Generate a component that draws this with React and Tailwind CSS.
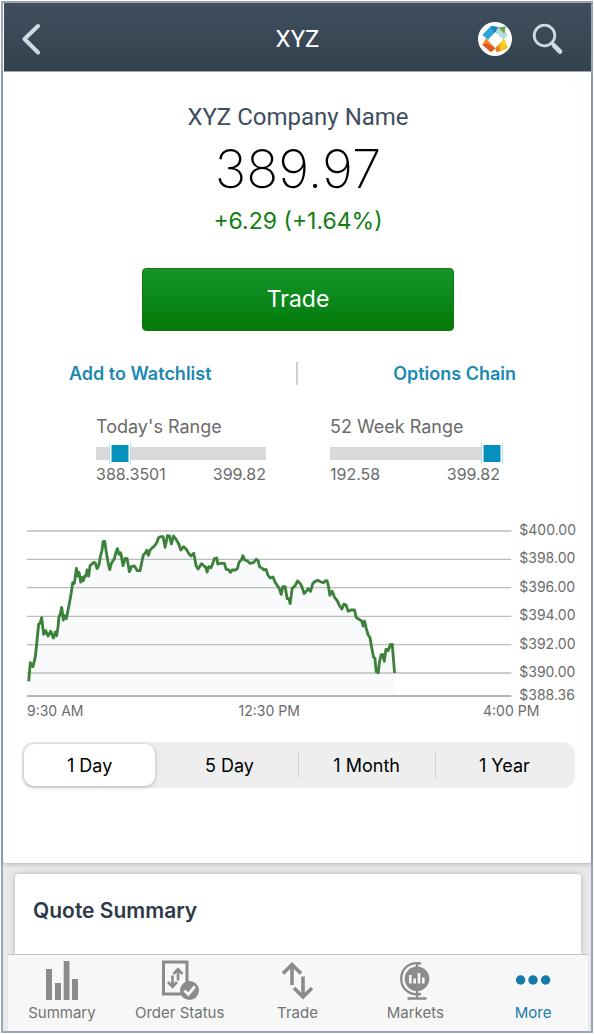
import { useState } from 'react';

const quote = {
  symbol: 'XYZ',
  name: 'XYZ Company Name',
  price: 389.97,
  change: '+6.29 (+1.64%)',
};

const ranges = [
  { label: "Today's Range", low: '388.3501', high: '399.82' },
  { label: '52 Week Range', low: '192.58', high: '399.82' },
];

const periods = ['1 Day', '5 Day', '1 Month', '1 Year'];

const priceTicks = ['$400.00', '$398.00', '$396.00', '$394.00', '$392.00', '$390.00'];
const gridLines = [33, 118, 203, 289, 374, 459, 528];

const intraday =
  '26,484 31,428 39,440 46,410 50,372 56,312 60,310 65,293 71,343 77,332 84,348 92,334 100,354 106,336 110,347 114,320 117,290 121,282 125,262 130,300 134,287 139,296 148,250 153,222 158,188 163,190 169,145 173,168 177,157 182,186 186,172 190,182 194,168 198,168 201,150 206,168 210,136 216,132 221,127 226,130 231,146 236,137 241,110 246,90 249,65 254,64 258,92 264,127 269,149 274,130 282,118 288,97 292,86 297,103 302,98 309,137 315,115 321,116 328,155 334,140 343,138 352,152 360,152 366,122 370,105 375,100 380,91 385,106 390,90 397,83 403,78 410,68 415,54 421,50 429,50 435,82 442,47 448,48 454,72 460,48 468,58 476,72 482,90 490,80 499,88 507,102 513,108 521,100 528,137 534,147 544,131 552,138 557,142 561,156 566,140 573,143 578,130 583,116 590,114 593,132 600,130 613,130 618,148 625,149 631,157 636,150 646,150 652,145 657,126 664,120 668,107 674,120 682,123 690,130 700,128 708,118 714,122 718,140 726,145 732,150 738,148 743,165 750,174 759,171 764,185 772,197 778,207 783,223 788,200 795,200 801,236 806,236 810,251 816,205 825,197 832,183 840,190 845,200 852,221 858,214 864,206 871,214 878,190 885,184 893,181 902,186 910,188 916,182 921,183 925,200 929,226 936,214 943,232 951,242 958,257 965,267 971,252 978,256 984,274 992,270 1003,270 1008,292 1016,298 1024,302 1029,318 1033,303 1038,325 1044,345 1049,352 1054,380 1060,412 1064,414 1068,455 1074,458 1078,425 1083,404 1088,404 1092,424 1097,388 1104,392 1110,374 1116,373 1123,459';

function ChevronIcon() {
  return (
    <svg className="w-5 h-8" viewBox="0 0 20 32" fill="none" stroke="#cddae4" strokeWidth="4" strokeLinecap="round" strokeLinejoin="round">
      <path d="M17 3 3.5 16 17 29.5" />
    </svg>
  );
}

function SearchIcon() {
  return (
    <svg className="w-8 h-8" viewBox="0 0 32 32" fill="none" stroke="#cddae4">
      <circle cx="12.5" cy="12.5" r="10.3" strokeWidth="2.8" />
      <path d="m20 20 2.5 2.5" strokeWidth="2.8" />
      <path d="m22 22.5 6 6" strokeWidth="4.6" strokeLinecap="round" />
    </svg>
  );
}

function LogoIcon() {
  return (
    <svg className="w-[34px] h-[34px]" viewBox="0 0 102 102">
      <circle cx="51" cy="51" r="51" fill="#fff" />
      <path d="M13 38 39 12 59 15 66 22 31 55Z" fill="#2ba6d6" />
      <path d="M39 12 59 15 66 22 50 38Z" fill="#1583b4" />
      <path d="m59 17 24-4-2 14 8 13-14 13-22-24Z" fill="#b5dce0" />
      <path d="m59 17 24-4-4 22-13-13Z" fill="#69ab4b" />
      <path d="m24 49 28 30-12 11-27-22Z" fill="#f08a2a" />
      <path d="m13 68 14-4 25 15-13 12Z" fill="#e0591f" />
      <path d="m52 79 26-29 11 28-20 10-14 1Z" fill="#f2b51c" />
      <path d="m70 60 8-10 8 20-16 17Z" fill="#f2d21c" />
      <path d="m52 79 9-10 5 19-12 1Z" fill="#e27c20" />
      <path d="m52 30 21 21-21 22-21-21Z" fill="#fff" />
    </svg>
  );
}

function SummaryIcon() {
  return (
    <svg className="w-10 h-10" viewBox="0 0 40 40" fill="currentColor">
      <path d="M4 9h6v31H4zM13 23h6v17h-6zM21.7 1h5.8v39h-5.8zM30 19h6v21h-6z" />
    </svg>
  );
}

function OrderStatusIcon() {
  return (
    <svg className="w-10 h-10" viewBox="0 0 40 40" fill="none" stroke="currentColor">
      <path d="M3.5 2h23.5v32H3.5z" strokeWidth="3" />
      <path d="M18 20.5V9m-4.5 5L18 9.2l4.5 4.8M12.5 15.5V27M8 22l4.5 4.8L17 22" strokeWidth="2.6" />
      <circle cx="29.5" cy="30.5" r="9.5" fill="currentColor" stroke="none" />
      <path d="m24.5 30.5 3.8 4 6.5-8" stroke="#f7f7f7" strokeWidth="2.8" />
    </svg>
  );
}

function TradeIcon() {
  return (
    <svg className="w-10 h-10" viewBox="0 0 40 40" fill="none" stroke="currentColor" strokeWidth="3.6">
      <path d="M15 25V4.5M6 13.5l9-9 9 9M26 16.5V37M17 28l9 9 9-9" />
    </svg>
  );
}

function MarketsIcon() {
  return (
    <svg className="w-10 h-10" viewBox="0 0 40 40" fill="none" stroke="currentColor" strokeWidth="2.3">
      <circle cx="22" cy="18.7" r="12.3" fill="currentColor" stroke="none" />
      <path d="M26 3.5C14 1 6.2 9.5 6.2 18.7S14 36.5 26 34M22 3v5M22 30v8M12.5 38.5h19" />
      <path d="M15.3 23.5V15M19.7 23.5v-5M24 23.5V13M28.3 23.5v-6" stroke="#f7f7f7" strokeWidth="2.6" />
    </svg>
  );
}

function MoreIcon() {
  return (
    <svg className="w-10 h-10" viewBox="0 0 40 40" fill="currentColor">
      <circle cx="7.6" cy="20" r="4.7" />
      <circle cx="20" cy="20" r="4.7" />
      <circle cx="32.6" cy="20" r="4.7" />
    </svg>
  );
}

const tabs = [
  { label: 'Summary', Icon: SummaryIcon },
  { label: 'Order Status', Icon: OrderStatusIcon },
  { label: 'Trade', Icon: TradeIcon },
  { label: 'Markets', Icon: MarketsIcon },
  { label: 'More', Icon: MoreIcon, active: true },
];

function RangeBar({ label, low, high }) {
  const percent = ((quote.price - low) / (high - low)) * 100;

  return (
    <div className="w-[170px] text-[#6b6b6b]">
      <h2 className="text-lg leading-6">{label}</h2>
      <div className="relative mt-2 h-[13px] bg-[#d9d9d9]">
        <div
          className="absolute -top-1 size-[21px] -translate-x-1/2 border-2 border-white bg-[#0690be]"
          style={{ left: `${percent}%` }}
        />
      </div>
      <div className="mt-1 flex justify-between text-base leading-5">
        <span>{low}</span>
        <span>{high}</span>
      </div>
    </div>
  );
}

function PriceChart() {
  return (
    <div className="mt-9 flex pl-6 pr-[15px] text-sm leading-5 text-[#6b6b6b]">
      <div className="min-w-0 flex-1 pt-[11px]">
        <svg className="block h-[165px] w-full overflow-visible" viewBox="21 33 1452 495" preserveAspectRatio="none" role="img" aria-label="Intraday price">
          <polygon points={`26,528 ${intraday} 1123,528`} fill="#f9fafc" />
          {gridLines.map((y) => (
            <line key={y} x1="21" x2="1473" y1={y} y2={y} stroke={y === 528 ? '#9b9b9b' : '#bcbcbc'} strokeWidth="4" />
          ))}
          <polyline points={intraday} fill="none" stroke="#3b8139" strokeWidth="8.5" strokeLinejoin="round" />
        </svg>
        <div className="-mr-7 mt-[5px] flex justify-between">
          <span>9:30 AM</span>
          <span className="mr-7">12:30 PM</span>
          <span>4:00 PM</span>
        </div>
      </div>
      <div className="ml-2">
        <ul className="flex h-[162px] flex-col justify-between">
          {priceTicks.map((tick) => (
            <li key={tick}>{tick}</li>
          ))}
        </ul>
        <div className="mt-[3px]">$388.36</div>
      </div>
    </div>
  );
}

function PeriodPicker() {
  const [period, setPeriod] = useState('1 Day');

  return (
    <div className="ml-[19px] mr-4 mt-[21px] grid h-[46px] grid-cols-4 rounded-xl bg-[#eeeeee] p-[2px]">
      {periods.map((item, index) => (
        <div key={item} className="flex items-center">
          <button
            type="button"
            onClick={() => setPeriod(item)}
            aria-pressed={item === period}
            className={
              item === period
                ? 'mr-[6px] h-full flex-1 rounded-[10px] bg-white pt-px text-lg text-black shadow-[0_1px_4px_rgba(0,0,0,0.25)]'
                : 'h-full flex-1 pt-px text-lg text-black'
            }
          >
            {item}
          </button>
          {(index === 1 || index === 2) && <div className="h-[26px] w-px bg-[#cfcfd2]" />}
        </div>
      ))}
    </div>
  );
}

export default function App() {
  return (
    <div className="flex min-h-screen bg-white p-px font-['Inter',sans-serif]">
      <div className="flex min-w-0 flex-1 flex-col border-2 border-[#98a6b5] bg-[#e8e8e8]">
        <header className="grid h-[69px] grid-cols-[1fr_auto_1fr] items-center border-b border-l border-b-[#a9b0b7] border-l-white bg-linear-to-b from-[#3f4f5d] to-[#33424f] pb-1 pt-2">
          <button type="button" aria-label="Back" className="ml-[17px] w-5">
            <ChevronIcon />
          </button>
          <h1 className="text-2xl text-white font-['Roboto',sans-serif]">{quote.symbol}</h1>
          <div className="flex items-center justify-end gap-5 pr-[27px]">
            <button type="button" aria-label="Home">
              <LogoIcon />
            </button>
            <button type="button" aria-label="Search">
              <SearchIcon />
            </button>
          </div>
        </header>

        <main className="flex flex-1 flex-col">
          <section className="rounded-b-[3px] bg-white pb-[75px] pt-[31px] shadow-[0_1px_4px_rgba(0,0,0,0.25)]">
            <div className="pl-[2px] text-center">
              <h2 className="text-2xl leading-7 text-[#3f4e5e] font-['Roboto',sans-serif]">{quote.name}</h2>
              <p className="mt-2 text-[53px] leading-[60px] font-extralight text-black">{quote.price}</p>
              <p className="mt-[6px] text-[23px] leading-8 text-[#137d13]">{quote.change}</p>
              <button
                type="button"
                className="mt-[31px] h-[63px] w-[312px] rounded-[4px] border border-[#1a7212] bg-linear-to-b from-[#14962a] to-[#047a06] text-[23px] text-white"
              >
                Trade
              </button>
            </div>

            <div className="mt-[31px] grid grid-cols-[1fr_auto_1fr] items-center text-lg leading-[23px] font-semibold text-[#1b89b0]">
              <a href="#watchlist" className="pl-[66px]">Add to Watchlist</a>
              <div className="h-[23px] w-[2px] bg-[#d0d0d0]" />
              <a href="#options" className="pr-[75px] text-right">Options Chain</a>
            </div>

            <div className="mt-[30px] flex justify-center gap-16 pl-[2px]">
              {ranges.map((range) => (
                <RangeBar key={range.label} {...range} />
              ))}
            </div>

            <PriceChart />
            <PeriodPicker />
          </section>

          <section className="ml-3 mr-[10px] mt-[11px] flex-1 rounded-t-[4px] bg-white px-[18px] pt-[23px] shadow-[0_0_5px_rgba(0,0,0,0.25)]">
            <h2 className="text-[21px] leading-7 font-semibold text-[#2e3947]">Quote Summary</h2>
          </section>
        </main>

        <nav className="relative ml-[5px] mr-[3px] h-[77px] border-t border-[#c4c4c4] bg-[#f7f7f7] pt-[5px]">
          <div className="-ml-[5px] -mr-1 grid grid-cols-5">
            {tabs.map(({ label, Icon, active }) => (
              <a
                key={label}
                href={`#${label.toLowerCase().replace(' ', '-')}`}
                className={active ? 'flex flex-col items-center text-[#147bab]' : 'flex flex-col items-center text-[#8b8b8b]'}
              >
                <Icon />
                <span className={active ? 'mt-[3px] text-[15px] leading-5' : 'mt-[3px] text-[15px] leading-5 text-[#727272]'}>{label}</span>
              </a>
            ))}
          </div>
        </nav>
      </div>
    </div>
  );
}
